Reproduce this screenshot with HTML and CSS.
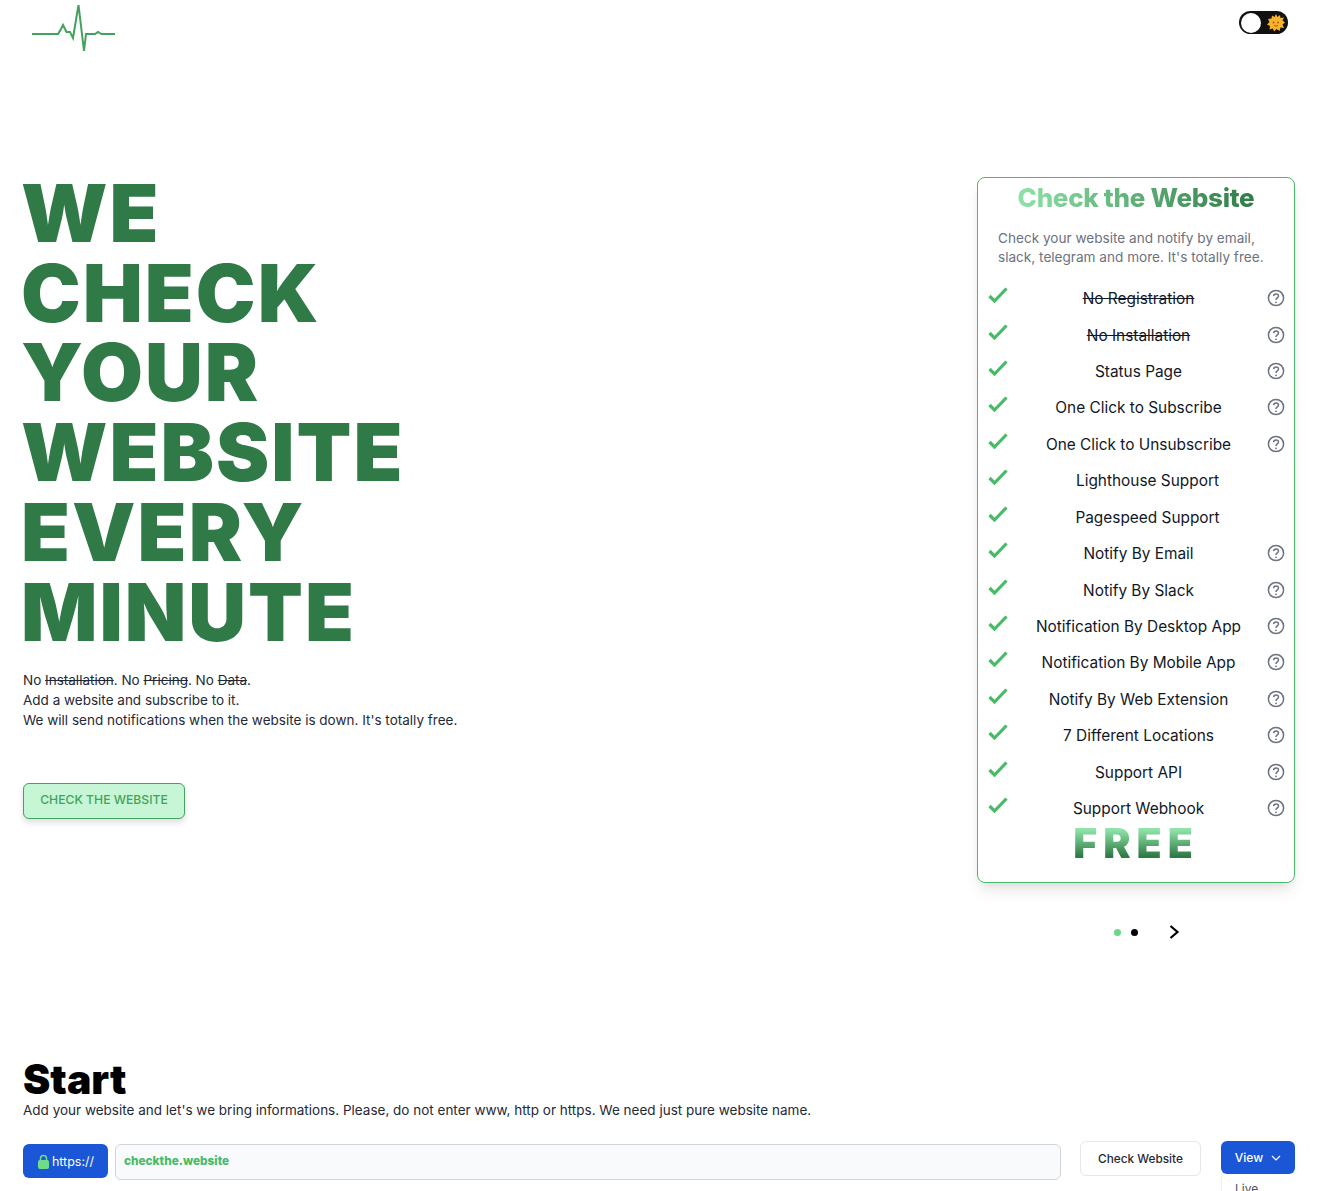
FILE: index.html
```html
<!DOCTYPE html>
<html lang="en">
<head>
<meta charset="utf-8">
<title>Check the Website</title>
<link rel="stylesheet" href="styles.css">
</head>
<body>
<svg width="0" height="0" class="defs">
  <defs>
    <symbol id="check" viewBox="0 0 20 16"><path d="M1.5 9 L6.5 14 L18.5 1.5" fill="none" stroke="#48bb68" stroke-width="3.2"/></symbol>
    <symbol id="help" viewBox="0 0 18 18"><circle cx="9" cy="9" r="7.6" fill="none" stroke="#6b7280" stroke-width="1.5"/><path d="M6.6 7.1 C6.8 4.2 11.5 4.2 11.5 7 C11.5 9 9 8.9 9 11" fill="none" stroke="#6b7280" stroke-width="1.5"/><circle cx="9" cy="13.3" r=".9" fill="#6b7280"/></symbol>
  </defs>
</svg>
<header class="topbar">
  <svg class="logo" width="84" height="46" viewBox="0 0 84 46"><path d="M0 29 H26 L29 24 L31 20 L34.5 27 L38 27 L41 33 L46.500 0 L52 46 L54 29 H63 L66 27 L69.500 29 H83" fill="none" stroke="#41a35c" stroke-width="2"/></svg>
  <div class="toggle">
    <span class="knob"></span>
    <svg class="sun" width="18" height="18" viewBox="0 0 18 18"><path d="M9 0 L10.500 3 L13 1 L13.500 4 L17 3.500 L15.500 6.500 L18 8.500 L15.500 10.500 L17 14 L13.500 13.500 L12.500 17 L9.500 15 L7 17.500 L6 14.500 L2.500 15.500 L3 12 L0 10.500 L2.500 8 L1 5 L4.500 4.500 L5 1.500 L7.500 3 Z" fill="#f7b32b"/><circle cx="6.500" cy="8.500" r="1" fill="#b3541e"/><circle cx="11" cy="8.500" r="1" fill="#b3541e"/><path d="M7 11.500 Q9 12.500 11 11.500" fill="none" stroke="#b3541e"/></svg>
  </div>
</header>

<main class="hero">
  <section class="intro">
    <h1>WE<br>CHECK<br>YOUR<br>WEBSITE<br>EVERY<br>MINUTE</h1>
    <p class="lead">No <s>Installation</s>. No <s>Pricing</s>. No <s>Data</s>.<br>Add a website and subscribe to it.<br>We will send notifications when the website is down. It's totally free.</p>
    <a class="cta">CHECK THE WEBSITE</a>
  </section>
  <section class="side">
    <div class="card">
      <h2>Check the Website</h2>
      <p class="card-desc">Check your website and notify by email, slack, telegram and more. It's totally free.</p>
      <ul class="features">
        <li><svg class="ck"><use href="#check"/></svg><s class="label">No Registration</s><svg class="hp"><use href="#help"/></svg></li>
        <li><svg class="ck"><use href="#check"/></svg><s class="label">No Installation</s><svg class="hp"><use href="#help"/></svg></li>
        <li><svg class="ck"><use href="#check"/></svg><span class="label">Status Page</span><svg class="hp"><use href="#help"/></svg></li>
        <li><svg class="ck"><use href="#check"/></svg><span class="label">One Click to Subscribe</span><svg class="hp"><use href="#help"/></svg></li>
        <li><svg class="ck"><use href="#check"/></svg><span class="label">One Click to Unsubscribe</span><svg class="hp"><use href="#help"/></svg></li>
        <li><svg class="ck"><use href="#check"/></svg><span class="label">Lighthouse Support</span></li>
        <li><svg class="ck"><use href="#check"/></svg><span class="label">Pagespeed Support</span></li>
        <li><svg class="ck"><use href="#check"/></svg><span class="label">Notify By Email</span><svg class="hp"><use href="#help"/></svg></li>
        <li><svg class="ck"><use href="#check"/></svg><span class="label">Notify By Slack</span><svg class="hp"><use href="#help"/></svg></li>
        <li><svg class="ck"><use href="#check"/></svg><span class="label">Notification By Desktop App</span><svg class="hp"><use href="#help"/></svg></li>
        <li><svg class="ck"><use href="#check"/></svg><span class="label">Notification By Mobile App</span><svg class="hp"><use href="#help"/></svg></li>
        <li><svg class="ck"><use href="#check"/></svg><span class="label">Notify By Web Extension</span><svg class="hp"><use href="#help"/></svg></li>
        <li><svg class="ck"><use href="#check"/></svg><span class="label">7 Different Locations</span><svg class="hp"><use href="#help"/></svg></li>
        <li><svg class="ck"><use href="#check"/></svg><span class="label">Support API</span><svg class="hp"><use href="#help"/></svg></li>
        <li><svg class="ck"><use href="#check"/></svg><span class="label">Support Webhook</span><svg class="hp"><use href="#help"/></svg></li>
      </ul>
      <div class="free">FREE</div>
    </div>
    <div class="pager">
      <span class="dot dot-on"></span><span class="dot"></span>
      <svg class="next" width="12" height="14" viewBox="0 0 12 14"><path d="M2.500 1 L9.500 7 L2.500 13" fill="none" stroke="#000" stroke-width="2.200"/></svg>
    </div>
  </section>
</main>

<section class="start">
  <h2 class="start-title">Start</h2>
  <p class="start-desc">Add your website and let's we bring informations. Please, do not enter www, http or https. We need just pure website name.</p>
  <div class="form">
    <div class="proto">
      <svg width="13" height="15" viewBox="0 0 13 15"><path d="M3.500 7 V4.500 a3 3 0 0 1 6 0 V7" fill="none" stroke="#6fdc8c" stroke-width="1.500"/><rect x="1" y="6" width="11" height="9" rx="2" fill="#6fdc8c"/></svg>
      <span>https://</span>
    </div>
    <div class="domain">checkthe.website</div>
    <button class="check-btn">Check Website</button>
    <div class="view-wrap">
      <button class="view-btn">View <svg width="10" height="6" viewBox="0 0 10 6"><path d="M1 1 L5 5 L9 1" fill="none" stroke="#fff" stroke-width="1.200"/></svg></button>
      <div class="menu">Live</div>
    </div>
  </div>
</section>
</body>
</html>
```
FILE: styles.css
```css
* { box-sizing: border-box; }
html, body { margin: 0; padding: 0; height: 1191px; overflow: hidden; background: #fff; }
body { font-family: Inter, "Liberation Sans", sans-serif; color: #111827; }
.defs { position: absolute; }

.topbar { display: flex; justify-content: space-between; padding: 5px 33px 0 32px; height: 173px; }
.logo { display: block; }
.toggle { width: 49px; height: 23px; margin-top: 6px; border-radius: 12px; background: #111; display: flex; align-items: center; justify-content: space-between; padding: 0 3px 0 2px; }
.knob { width: 20px; height: 20px; border-radius: 50%; background: #fff; }
.sun { display: block; }

.hero { display: flex; justify-content: space-between; padding: 0 26px 0 23px; height: 863px; }
h1 { margin: 0 0 0 -2px; font-size: 80px; line-height: 79.700px; font-weight: 900; color: #2f7a46; letter-spacing: 2px; }
.lead { margin: 19px 0 0; font-size: 13.500px; line-height: 20px; color: #1f2937; }
.cta { display: inline-block; margin-top: 53px; width: 162px; height: 36px; line-height: 32px; text-align: center; font-size: 12.200px; font-weight: 500; color: #41a35c; background: #c6f6d5; border: 1px solid #41a35c; border-radius: 6px; box-shadow: 0 4px 6px rgba(0,0,0,.12); }

.side { width: 318px; margin-top: 4px; }
.card { height: 706px; border: 1px solid #48bb68; border-radius: 8px; box-shadow: 0 10px 15px -3px rgba(0,0,0,.1), 0 4px 6px -2px rgba(0,0,0,.05); padding-top: 5px; }
.card h2 { margin: 0; text-align: center; font-size: 26px; line-height: 30px; font-weight: 800; letter-spacing: -.3px; background: linear-gradient(90deg, #8fe3a8 12%, #2f7a46 88%); -webkit-background-clip: text; background-clip: text; color: transparent; }
.card-desc { margin: 16px 0 0; padding: 0 20px; font-size: 13.600px; line-height: 19px; color: #6b7280; }
.features { list-style: none; margin: 14px 0 0; padding: 0 9px 0 11px; }
.features li { display: flex; height: 36.430px; align-items: center; }
.ck { width: 20px; height: 16px; margin: -8px 2px 0 -1px; flex: none; }
.hp { width: 18px; height: 18px; flex: none; margin-top: -2px; }
.label { flex: 1; text-align: center; font-size: 15.400px; line-height: 20px; color: #111827; }
.free { text-align: center; font-size: 41px; line-height: 44px; font-weight: 900; letter-spacing: 6px; margin-top: -6px; background: linear-gradient(180deg, #8fe3a8 20%, #2f7a46 80%); -webkit-background-clip: text; background-clip: text; color: transparent; }

.pager { display: flex; align-items: center; height: 14px; margin: 42px 0 0 137px; }
.dot { width: 7px; height: 7px; border-radius: 50%; background: #000; margin-right: 10px; }
.dot-on { background: #68d88a; }
.next { margin-left: 20px; }

.start { padding: 0 26px 0 23px; margin-top: 23px; }
.start-title { margin: 1px 0 0; font-size: 41px; line-height: 41px; font-weight: 900; color: #000; }
.start-desc { margin: 0; font-size: 13.500px; line-height: 20px; color: #1f2937; }
.form { display: flex; align-items: flex-start; margin-top: 21px; }
.proto { width: 85px; height: 34px; margin-top: 3px; border-radius: 6px; background: #1a56d6; color: #fff; display: flex; align-items: center; justify-content: center; gap: 2px; font-size: 12.500px; }
.domain { width: 946px; height: 36px; margin: 3px 0 0 7px; background: #f9fafb; border: 1px solid #d1d5db; border-radius: 6px; padding-left: 8px; line-height: 33px; font-size: 11.800px; font-weight: 800; color: #48bb68; }
.check-btn { width: 121px; height: 35px; margin-left: 19px; background: #fff; border: 1px solid #e5e7eb; border-radius: 6px; font: 500 11.800px Inter, "Liberation Sans", sans-serif; color: #1f2937; }
.view-wrap { position: relative; margin-left: 20px; }
.view-btn { width: 74px; height: 33px; background: #1a56d6; border: 0; border-radius: 6px; font: 500 12px Inter, "Liberation Sans", sans-serif; color: #fff; display: flex; align-items: center; justify-content: center; gap: 8px; }
.menu { position: absolute; top: 33px; left: 0; width: 110px; padding: 7px 13px; background: #fff; border-left: 1px solid #f0f0f0; font-size: 12px; color: #4b5563; }
```
